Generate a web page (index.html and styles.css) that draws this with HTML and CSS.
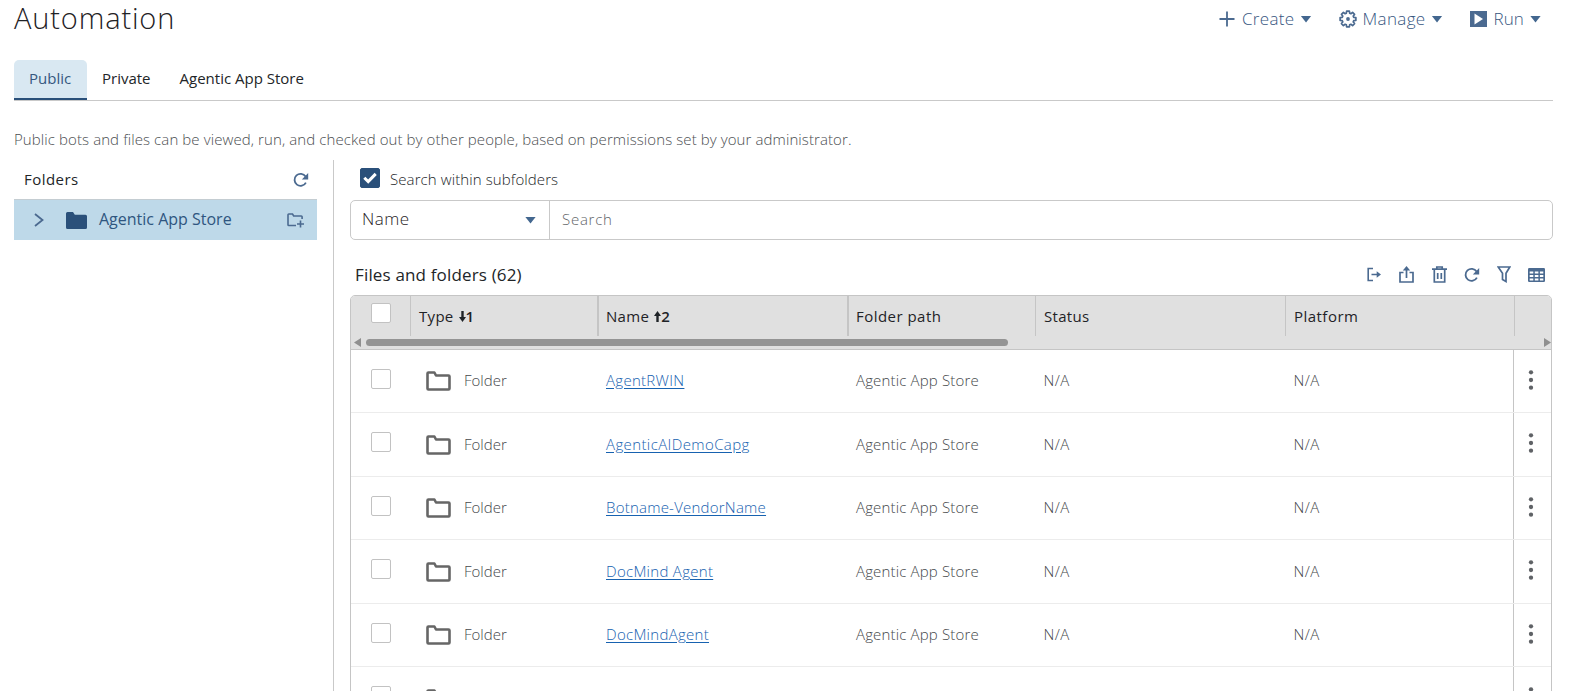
FILE: index.html
```html
<!DOCTYPE html>
<html lang="en">
<head>
<meta charset="utf-8">
<title>Automation</title>
<link rel="stylesheet" href="styles.css">
</head>
<body>
<svg class="defs" width="0" height="0">
  <symbol id="refresh" viewBox="0 0 16 16"><path d="M12.9 10.6A6 6 0 1 1 12.6 4.6" fill="none" stroke="currentColor" stroke-width="1.8"/><path d="M15.200 1v6.400H8.800z" fill="currentColor"/></symbol>
  <symbol id="folder" viewBox="0 0 25 20"><path d="M1.5 17.6V2.4q0-.9.9-.9h6l1.6 3h12.5q1 0 1 1v12.1q0 .9-.9.9H2.4q-.9 0-.9-.9z" fill="none" stroke="#666" stroke-width="2.6" stroke-linejoin="round"/></symbol>
  <symbol id="dots" viewBox="0 0 6 20"><g fill="#5f6266"><circle cx="3" cy="2.3" r="2.15"/><circle cx="3" cy="10" r="2.15"/><circle cx="3" cy="17.7" r="2.15"/></g></symbol>
</svg>
<header class="header">
  <h1 class="title">Automation</h1>
  <nav class="actions">
    <a class="action create"><svg width="16" height="16" viewBox="0 0 16 16"><path d="M8 .5v15M.5 8h15" stroke="currentColor" stroke-width="1.8"/></svg><span>Create</span><i class="caret"></i></a>
    <a class="action manage"><svg width="18" height="18" viewBox="-9 -9 18 18"><path d="M5.770-1.650 7.880-1.390V1.390L5.770 1.650 5.250 2.910 6.550 4.590 4.590 6.550 2.910 5.250 1.650 5.770 1.390 7.880H-1.390L-1.650 5.770-2.910 5.250-4.590 6.550-6.550 4.590-5.250 2.910-5.770 1.650-7.880 1.390V-1.390L-5.770-1.650-5.250-2.910-6.550-4.590-4.590-6.550-2.910-5.250-1.650-5.770-1.390-7.880H1.390L1.650-5.770 2.910-5.250 4.590-6.550 6.550-4.590 5.250-2.910z" fill="none" stroke="currentColor" stroke-width="1.700" stroke-linejoin="round"/><circle r="1.900" fill="currentColor"/></svg><span>Manage</span><i class="caret"></i></a>
    <a class="action run"><svg width="17" height="16" viewBox="0 0 17 16"><path d="M0 0h17v16H0z" fill="currentColor"/><path d="M4.500 2.500 13 8l-8.500 5.500z" fill="#fff"/></svg><span>Run</span><i class="caret"></i></a>
  </nav>
</header>
<div class="tabs">
  <a class="tab active"><span>Public</span></a>
  <a class="tab"><span>Private</span></a>
  <a class="tab store"><span>Agentic App Store</span></a>
</div>
<p class="intro">Public bots and files can be viewed, run, and checked out by other people, based on permissions set by your administrator.</p>
<div class="layout">
  <aside class="side">
    <div class="side-head"><span class="side-title">Folders</span><svg width="16" height="16"><use href="#refresh"/></svg></div>
    <div class="tree-row">
      <svg width="10" height="14" viewBox="0 0 10 14"><path d="M1 1l7.500 6L1 13" fill="none" stroke="currentColor" stroke-width="1.800"/></svg>
      <svg class="tree-folder" width="21" height="17" viewBox="0 0 21 17"><path d="M0 1.500Q0 0 1.500 0H7l1.800 2.700h10.700q1.500 0 1.500 1.500v11.300q0 1.500-1.500 1.500h-18Q0 17 0 15.500z" fill="#2a507a"/></svg>
      <span class="tree-name">Agentic App Store</span>
      <svg width="18" height="15" viewBox="0 0 18 15"><path d="M9 12.500H1.800q-.8 0-.8-.8V1.800Q1 1 1.800 1h3.700l1.200 2h7.600q.8 0 .8.800V6M13.500 7.500v7M10 11h7" fill="none" stroke="currentColor" stroke-width="1.600"/></svg>
    </div>
  </aside>
  <main class="main">
    <label class="sub"><span class="check on"><svg width="14" height="12" viewBox="0 0 14 12"><path d="M1.300 5.800 5.200 9.600 12.700 1.900" fill="none" stroke="#fff" stroke-width="3"/></svg></span><span class="sub-text">Search within subfolders</span></label>
    <div class="searchbar"><div class="select"><span class="select-text">Name</span><i class="caret"></i></div><div class="search"><span>Search</span></div></div>
    <div class="list-head">
      <h2 class="list-title">Files and folders (62)</h2>
      <div class="tools">
        <svg width="15" height="15" viewBox="0 0 15 15"><path d="M6 1.500H1.200v12H6M4.500 7.500h7" fill="none" stroke="currentColor" stroke-width="1.600"/><path d="M9.700 4.300 14 7.500l-4.300 3.200z" fill="currentColor"/></svg>
        <svg width="15" height="17" viewBox="0 0 15 17"><path d="M4.500 6.500H1v9.500h13V6.500h-3.500M7.500 12V3" fill="none" stroke="currentColor" stroke-width="1.700"/><path d="M3.800 4.500 7.500 0l3.700 4.500z" fill="currentColor"/></svg>
        <svg width="15" height="17" viewBox="0 0 15 17"><path d="M0 3.200h15M4.800 3V1h5.400v2M2.300 4v12h10.400V4M5.700 7v6M9.300 7v6" fill="none" stroke="currentColor" stroke-width="1.700"/></svg>
        <svg width="16" height="16"><use href="#refresh"/></svg>
        <svg width="14" height="17" viewBox="0 0 14 17"><path d="M1.200 1h11.600L9 7.200V15.500L5.500 13.500V7.200z" fill="none" stroke="currentColor" stroke-width="1.700"/></svg>
        <svg width="17" height="14" viewBox="0 0 17 14"><rect width="17" height="14" rx="1.200" fill="currentColor"/><path d="M1.700 3.500h3.600v2H1.700zM6.800 3.500h3.600v2H6.800zM11.900 3.500h3.400v2h-3.400zM1.700 7h3.600v2H1.700zM6.800 7h3.600v2H6.800zM11.900 7h3.400v2h-3.400zM1.700 10.500h3.600v2H1.700zM6.800 10.500h3.600v2H6.800zM11.900 10.500h3.400v2h-3.400z" fill="#fff"/></svg>
      </div>
    </div>
    <section class="table">
      <div class="thead">
        <div class="cols">
          <div class="th pick"><span class="check"></span></div>
          <div class="th sep"><span>Type</span><svg class="sort" width="7" height="11" viewBox="0 0 7 11"><path d="M3.500 0v8" stroke="currentColor" stroke-width="2.400"/><path d="M0 6h7L3.500 11z" fill="currentColor"/></svg><b>1</b></div>
          <div class="th sep wide"><span>Name</span><svg class="sort" width="7" height="11" viewBox="0 0 7 11"><path d="M3.500 11V3" stroke="currentColor" stroke-width="2.400"/><path d="M0 5h7L3.500 0z" fill="currentColor"/></svg><b>2</b></div>
          <div class="th sep wide h-path"><span>Folder path</span></div>
          <div class="th sep"><span>Status</span></div>
          <div class="th sep h-path"><span>Platform</span></div>
          <div class="th sep"></div>
        </div>
        <div class="scroll"><i class="arr left"></i><i class="thumb"></i><i class="arr right"></i></div>
      </div>
      <div class="row"><div class="pick"><span class="check"></span></div><div class="type"><svg width="25" height="20"><use href="#folder"/></svg><span class="c-type">Folder</span></div><div><a class="link">AgentRWIN</a></div><div class="path">Agentic App Store</div><div class="na">N/A</div><div class="na">N/A</div><div class="menu"><svg width="6" height="20"><use href="#dots"/></svg></div></div>
      <div class="row"><div class="pick"><span class="check"></span></div><div class="type"><svg width="25" height="20"><use href="#folder"/></svg><span class="c-type">Folder</span></div><div><a class="link loose">AgenticAIDemoCapg</a></div><div class="path">Agentic App Store</div><div class="na">N/A</div><div class="na">N/A</div><div class="menu"><svg width="6" height="20"><use href="#dots"/></svg></div></div>
      <div class="row"><div class="pick"><span class="check"></span></div><div class="type"><svg width="25" height="20"><use href="#folder"/></svg><span class="c-type">Folder</span></div><div><a class="link tight">Botname-VendorName</a></div><div class="path">Agentic App Store</div><div class="na">N/A</div><div class="na">N/A</div><div class="menu"><svg width="6" height="20"><use href="#dots"/></svg></div></div>
      <div class="row"><div class="pick"><span class="check"></span></div><div class="type"><svg width="25" height="20"><use href="#folder"/></svg><span class="c-type">Folder</span></div><div><a class="link">DocMind Agent</a></div><div class="path">Agentic App Store</div><div class="na">N/A</div><div class="na">N/A</div><div class="menu"><svg width="6" height="20"><use href="#dots"/></svg></div></div>
      <div class="row"><div class="pick"><span class="check"></span></div><div class="type"><svg width="25" height="20"><use href="#folder"/></svg><span class="c-type">Folder</span></div><div><a class="link">DocMindAgent</a></div><div class="path">Agentic App Store</div><div class="na">N/A</div><div class="na">N/A</div><div class="menu"><svg width="6" height="20"><use href="#dots"/></svg></div></div>
      <div class="row"><div class="pick"><span class="check"></span></div><div class="type"><svg width="25" height="20"><use href="#folder"/></svg></div><div></div><div></div><div></div><div></div><div class="menu"><svg width="6" height="20"><use href="#dots"/></svg></div></div>
    </section>
  </main>
</div>
</body>
</html>
```
FILE: styles.css
```css
* { box-sizing: border-box; }
html { height: 100%; overflow: hidden; }
body { margin: 0; padding: 0 28px 0 14px; height: 100vh; overflow: hidden; display: flex; flex-direction: column; background: #fff; color: #2d3136; font: 300 15px/20px "Open Sans", "Noto Sans", sans-serif; }
svg { display: block; flex: none; }
span, a { white-space: nowrap; }
.defs { position: absolute; }
.header { height: 60px; flex: none; display: flex; justify-content: space-between; }
.title { margin: 0; font-size: 29px; line-height: 36px; font-weight: 300; color: #1f2225; letter-spacing: .86px; }
.actions { display: flex; height: 38px; align-items: center; color: #4b6a90; font-size: 17px; padding-right: 12px; }
.action { display: flex; align-items: center; }
.action span { margin-left: 7px; letter-spacing: .35px; color: #36567f; }
.action .caret { margin-left: 6px; }
.manage, .run { margin-left: 27px; }
.manage span { margin-left: 6px; }
.run span { margin-left: 7px; letter-spacing: .1px; }
.caret { width: 11px; height: 7px; background: #43678f; clip-path: polygon(0 0, 100% 0, 50% 100%); }
.tabs { height: 41px; flex: none; display: flex; border-bottom: 1px solid #c9c9c9; }
.tab { height: 40px; padding: 0 15px; line-height: 36px; font-weight: 400; color: #222528; }
.tab.active { width: 73px; background: #d9e8f2; color: #35587f; border-radius: 5px 5px 0 0; border-bottom: 2px solid #2a507a; }
.store { padding-left: 14px; }
.intro { margin: 0; flex: none; height: 59px; padding-top: 28px; color: #4b4e51; white-space: nowrap; letter-spacing: .095px; }
.layout { flex: 1; min-height: 0; display: flex; overflow: hidden; }
.side { width: 303px; flex: none; }
.side-head { height: 39px; display: flex; align-items: center; justify-content: space-between; padding: 0 8px 0 10px; color: #4b6a90; }
.side-title { color: #222528; font-weight: 400; letter-spacing: .45px; padding-bottom: 2px; }
.tree-row { height: 41px; display: flex; align-items: center; background: #bed9e9; border-top: 1px solid #c4cdd2; color: #4b6a90; padding: 0 12px 0 20px; }
.tree-folder { margin-left: 22px; }
.tree-name { margin-left: 12px; flex: 1; font-size: 16px; color: #2f5680; font-weight: 400; padding-bottom: 3px; }
.main { flex: 1; min-width: 0; margin-left: 16px; border-left: 1px solid #c9c9c9; padding-left: 16px; overflow: hidden; }
.sub { height: 40px; display: flex; padding: 8px 0 0 10px; }
.sub-text { margin-left: 10px; padding-top: 1px; color: #222528; letter-spacing: .1px; }
.check { display: block; width: 20px; height: 20px; flex: none; border: 1px solid #c2c2c2; border-radius: 2px; background: #fff; }
.check.on { background: #2a507a; border-color: #2a507a; display: flex; justify-content: center; align-items: center; }
.searchbar { height: 40px; display: flex; border: 1px solid #c9c9c9; border-radius: 5px; }
.select { width: 199px; display: flex; align-items: center; justify-content: space-between; padding: 0 13px 0 11px; border-right: 1px solid #c9c9c9; font-size: 17px; }
.select-text { letter-spacing: .5px; padding-bottom: 2px; color: #1f2225; }
.search { display: flex; align-items: center; padding: 0 0 2px 12px; color: #626568; letter-spacing: .75px; }
.list-head { height: 55px; display: flex; align-items: center; justify-content: space-between; padding: 14px 0 0 5px; }
.list-title { margin: 0; font-size: 17px; font-weight: 400; color: #222528; letter-spacing: .16px; }
.tools { display: grid; grid-template-columns: repeat(6, 32.5px); justify-items: center; align-items: center; color: #4b6a90; }
.table { border: 1px solid #c5c5c5; border-radius: 5px 5px 0 0; width: 1202px; overflow: hidden; }
.thead { height: 54px; background: #e0e0e0; border-bottom: 1px solid #c5c5c5; }
.cols { height: 40px; }
.cols, .row { display: grid; grid-template-columns: 59px 187px 251px 187px 250px 229px 37px; }
.cols { grid-template-columns: 59px 187px 250px 188px 250px 229px 37px; }
.th { display: flex; align-items: center; font-weight: 400; color: #1f2327; padding-left: 8px; letter-spacing: .3px; }
.h-path { letter-spacing: .47px; }
.sep { border-left: 1px solid #c5c5c5; }
.wide { border-left-width: 2px; padding-left: 7px; }
.th.pick { padding: 7px 0 0 20px; align-items: flex-start; }
.th b { font-weight: 600; }
.sort { margin: 0 0 0 5px; }
.scroll { height: 13px; display: flex; align-items: center; }
.thumb { width: 642px; height: 7px; margin-left: 5px; border-radius: 4px; background: #949494; }
.arr { width: 7px; height: 9px; background: #8f8f8f; }
.left { margin-left: 3px; clip-path: polygon(100% 0, 100% 100%, 0 50%); }
.right { margin-left: auto; clip-path: polygon(0 0, 0 100%, 100% 50%); }
.row { height: 63px; border-bottom: 1px solid #ececec; color: #45484b; }
.row > div { padding: 20px 0 0 9px; }
.row:nth-child(odd) { height: 64px; }
.row:nth-child(odd) > div { padding-top: 21px; }
.row > .pick, .row:nth-child(odd) > .pick { padding: 19px 0 0 20px; }
.row > .type { display: flex; padding-left: 16px; }
.row svg { margin-top: 1px; }
.c-type { margin-left: 13px; }
.row > .path { padding-left: 8px; }
.row > .na { padding-left: 8.5px; }
.path { letter-spacing: .16px; }
.na { letter-spacing: .4px; }
.link { color: #1762b0; text-decoration: underline; text-underline-offset: 2px; letter-spacing: .29px; }
.loose { letter-spacing: .39px; }
.tight { letter-spacing: .23px; }
.row > .menu, .row:nth-child(odd) > .menu { margin-left: -1px; border-left: 1px solid #c5c5c5; padding: 19px 0 0 14px; }
```
